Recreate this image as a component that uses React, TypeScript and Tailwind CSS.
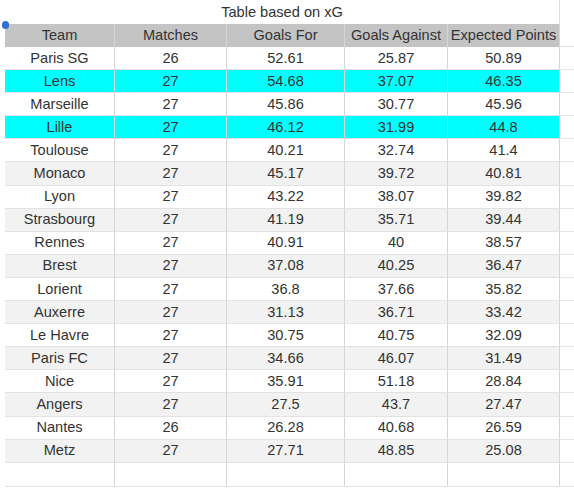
const rows: [string, number, string, string, string][] = [
  ["Paris SG", 26, "52.61", "25.87", "50.89"],
  ["Lens", 27, "54.68", "37.07", "46.35"],
  ["Marseille", 27, "45.86", "30.77", "45.96"],
  ["Lille", 27, "46.12", "31.99", "44.8"],
  ["Toulouse", 27, "40.21", "32.74", "41.4"],
  ["Monaco", 27, "45.17", "39.72", "40.81"],
  ["Lyon", 27, "43.22", "38.07", "39.82"],
  ["Strasbourg", 27, "41.19", "35.71", "39.44"],
  ["Rennes", 27, "40.91", "40", "38.57"],
  ["Brest", 27, "37.08", "40.25", "36.47"],
  ["Lorient", 27, "36.8", "37.66", "35.82"],
  ["Auxerre", 27, "31.13", "36.71", "33.42"],
  ["Le Havre", 27, "30.75", "40.75", "32.09"],
  ["Paris FC", 27, "34.66", "46.07", "31.49"],
  ["Nice", 27, "35.91", "51.18", "28.84"],
  ["Angers", 27, "27.5", "43.7", "27.47"],
  ["Nantes", 26, "26.28", "40.68", "26.59"],
  ["Metz", 27, "27.71", "48.85", "25.08"],
];

const highlighted = ["Lens", "Lille"];

const headers = ["Team", "Matches", "Goals For", "Goals Against", "Expected Points"];
const widths = ["w-[110px]", "w-[112px]", "w-[118px]", "w-[103px]", "w-[112px]"];

function Cell({ i, children }: { i: number; children?: React.ReactNode }) {
  return (
    <div
      className={`${widths[i]} flex h-full shrink-0 items-center justify-center border-r border-[#d6d6d6] pt-[1px]`}
    >
      {children}
    </div>
  );
}

export default function App() {
  return (
    <div
      className="relative h-[488px] w-[574px] overflow-hidden bg-white text-[14.6px] text-[#333]"
      style={{ fontFamily: '"Liberation Sans", Arial, sans-serif' }}
    >
      <div className="flex h-[24px] pl-[5px]">
        <div className="flex w-[555px] items-center justify-center border-r border-[#e0e0e0] pt-[1px]">
          Table based on xG
        </div>
      </div>

      <div className="flex h-[23px] pl-[5px]">
        <div className="flex h-full bg-[#c4c4c4]">
          {headers.map((h, i) => (
            <Cell key={h} i={i}>
              {h}
            </Cell>
          ))}
        </div>
        <div className="h-full w-[14px] border-b border-[#e0e0e0]" />
      </div>

      {rows.map((r, idx) => {
        const bg = highlighted.includes(r[0])
          ? "bg-[#00ffff]"
          : idx % 2 === 1
            ? "bg-[#f2f2f2]"
            : "bg-white";
        return (
          <div key={r[0]} className="flex h-[23.1px] pl-[5px]">
            <div className={`flex h-full border-b border-[#e2e2e2] ${bg}`}>
              {r.map((v, i) => (
                <Cell key={i} i={i}>
                  {v}
                </Cell>
              ))}
            </div>
            <div className="h-full w-[14px] border-b border-[#e6e6e6]" />
          </div>
        );
      })}

      <div className="flex h-[24px] pl-[5px]">
        <div className="flex h-full border-b border-[#e2e2e2]">
          {headers.map((h, i) => (
            <Cell key={h} i={i} />
          ))}
        </div>
        <div className="h-full w-[14px] border-b border-[#e6e6e6]" />
      </div>

      <div className="absolute left-[2px] top-[21px] h-[8px] w-[7px] rounded-full bg-[#2f6fd6]" />
    </div>
  );
}
